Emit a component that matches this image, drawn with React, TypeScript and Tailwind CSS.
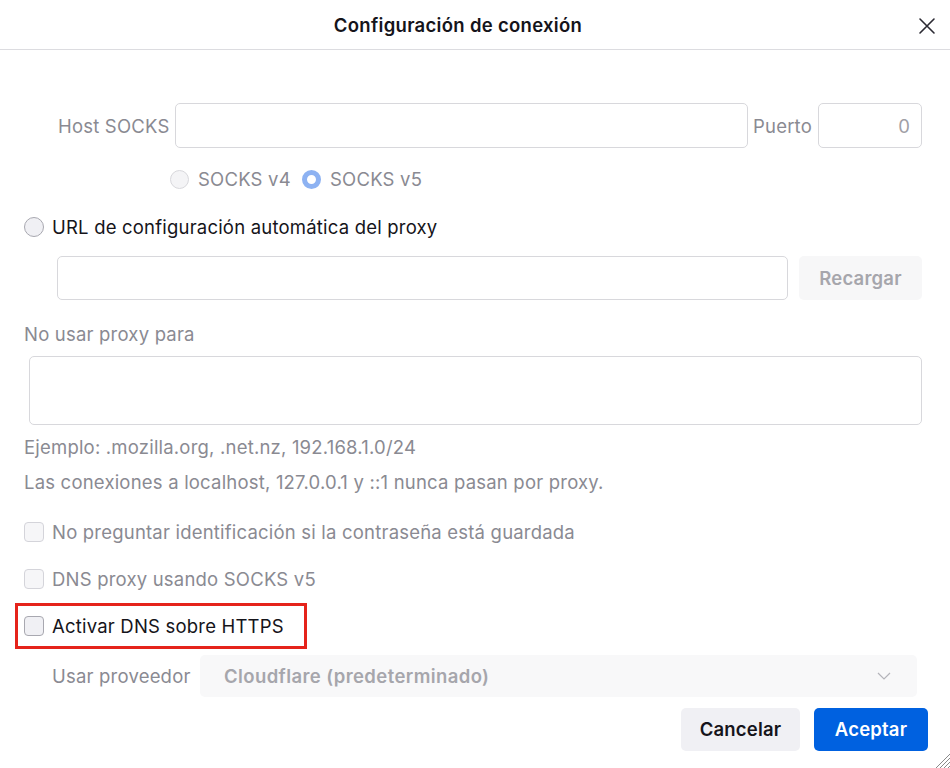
import React from "react";

const font = { fontFamily: "Inter, 'Noto Sans', 'Liberation Sans', sans-serif" };

function Checkbox() {
  return <span className="w-[20px] h-[20px] rounded-[4px] border border-[#d4d4da] bg-[#f6f6f8] shrink-0" />;
}

export default function App() {
  return (
    <div className="relative w-[950px] h-[768px] bg-white overflow-hidden text-[18.5px] tracking-[0.2px]" style={font}>
      {/* Header */}
      <div className="flex items-center h-[50px] border-b border-[#dcdce0]">
        <div className="flex-1 text-center font-semibold text-[18.5px] tracking-[0.3px] text-[#15141a] pt-[3px]">Configuración de conexión</div>
        <div className="w-[34px] flex justify-start pl-[2px] pt-[2px]">
          <svg width="18" height="18" viewBox="0 0 18 18" fill="none" stroke="#2b2a33" strokeWidth="1.6" strokeLinecap="round">
            <path d="M2 2 L16 16 M16 2 L2 16" />
          </svg>
        </div>
      </div>

      {/* Host row */}
      <div className="mt-[53px] flex items-center h-[45px] pl-[58px]">
        <span className="text-[#8a8a92] w-[111px] whitespace-nowrap pt-[2px]">Host SOCKS</span>
        <div className="ml-[6px] w-[573px] h-[45px] rounded-[5px] border border-[#d8d8dc] bg-white" />
        <span className="ml-[5px] w-[59px] text-[#8a8a92] whitespace-nowrap pt-[2px]">Puerto</span>
        <div className="ml-[6px] w-[104px] h-[45px] rounded-[5px] border border-[#d8d8dc] bg-white flex items-center justify-end pr-[11px] pt-[2px] text-[#a0a0a6]">0</div>
      </div>

      {/* SOCKS version */}
      <div className="mt-[18px] flex items-center h-[26px] pl-[170px] text-[#8a8a92]">
        <span className="w-[19px] h-[19px] rounded-full border border-[#d8d8dc] bg-[#f4f4f6]" />
        <span className="ml-[9px] w-[90px] whitespace-nowrap pt-[1px]">SOCKS v4</span>
        <span className="ml-[14px] w-[19px] h-[19px] rounded-full border-[5px] border-[#8db2f2] bg-white" />
        <span className="ml-[9px] whitespace-nowrap pt-[1px]">SOCKS v5</span>
      </div>

      {/* URL radio */}
      <div className="mt-[22px] flex items-center h-[26px] pl-[24px] text-[#15141a]">
        <span className="w-[20px] h-[20px] rounded-full border border-[#a8a8b0] bg-[#f0f0f4]" />
        <span className="ml-[8px] pt-[1px]">URL de configuración automática del proxy</span>
      </div>

      {/* URL input */}
      <div className="mt-[16px] flex items-center h-[44px] pl-[57px]">
        <div className="w-[731px] h-[44px] rounded-[5px] border border-[#d8d8dc] bg-white" />
        <div className="ml-[11px] w-[123px] h-[44px] rounded-[5px] bg-[#f7f7f8] flex items-center justify-center pt-[2px] font-semibold text-[#a6a6ac]">Recargar</div>
      </div>

      {/* No usar proxy */}
      <div className="mt-[22px] h-[24px] flex items-center pl-[24px] pt-[2px] text-[#8a8a92]">No usar proxy para</div>
      <div className="mt-[10px] ml-[29px] w-[893px] h-[69px] rounded-[5px] border border-[#d8d8dc] bg-white" />

      <div className="mt-[9px] h-[24px] flex items-center pl-[24px] pt-[3px] text-[#8a8a92]">Ejemplo: .mozilla.org, .net.nz, 192.168.1.0/24</div>
      <div className="mt-[12px] h-[24px] flex items-center pl-[24px] pt-[2px] text-[#8a8a92]">Las conexiones a localhost, 127.0.0.1 y ::1 nunca pasan por proxy.</div>

      <div className="mt-[26px] h-[24px] flex items-center pl-[24px] text-[#8a8a92]">
        <Checkbox />
        <span className="ml-[8px] pt-[2px]">No preguntar identificación si la contraseña está guardada</span>
      </div>
      <div className="mt-[23px] h-[24px] flex items-center pl-[24px] text-[#8a8a92]">
        <Checkbox />
        <span className="ml-[8px] pt-[2px]">DNS proxy usando SOCKS v5</span>
      </div>

      {/* Highlighted */}
      <div className="mt-[12px] ml-[15px] w-[292px] h-[46px] border-[3px] border-[#e5231b] flex items-center pl-[6px] text-[#15141a]">
        <span className="w-[20px] h-[20px] rounded-[4px] border border-[#a8a8b0] bg-[#f0f0f4] shrink-0" />
        <span className="ml-[8px] whitespace-nowrap pt-[1px]">Activar DNS sobre HTTPS</span>
      </div>

      {/* Provider */}
      <div className="mt-[6px] flex items-center h-[42px] pl-[52px]">
        <span className="text-[#8a8a92] w-[138px] whitespace-nowrap pt-[1px]">Usar proveedor</span>
        <div className="ml-[10px] w-[717px] h-[42px] rounded-[5px] bg-[#f8f8f9] flex items-center justify-between pl-[24px] pr-[26px]">
          <span className="font-semibold tracking-[0.4px] text-[#a6a6ac] pt-[1px]">Cloudflare (predeterminado)</span>
          <svg width="14" height="8" viewBox="0 0 14 8" fill="none" stroke="#b4b4ba" strokeWidth="1.2">
            <path d="M1 1 L7 7 L13 1" />
          </svg>
        </div>
      </div>

      {/* Buttons */}
      <div className="mt-[11px] flex justify-end pr-[22px] gap-[14px]">
        <div className="w-[119px] h-[43px] rounded-[5px] bg-[#f0f0f4] flex items-center justify-center pt-[1px] font-semibold text-[#15141a]">Cancelar</div>
        <div className="w-[114px] h-[43px] rounded-[5px] bg-[#0061e0] flex items-center justify-center pt-[1px] font-semibold text-white">Aceptar</div>
      </div>

      {/* resize grip */}
      <svg className="absolute right-0 bottom-0" width="16" height="16" viewBox="0 0 16 16" stroke="#8a8a8a" strokeWidth="1">
        <path d="M16 2 L2 16 M16 6 L6 16 M16 10 L10 16 M16 14 L14 16" />
      </svg>
    </div>
  );
}
